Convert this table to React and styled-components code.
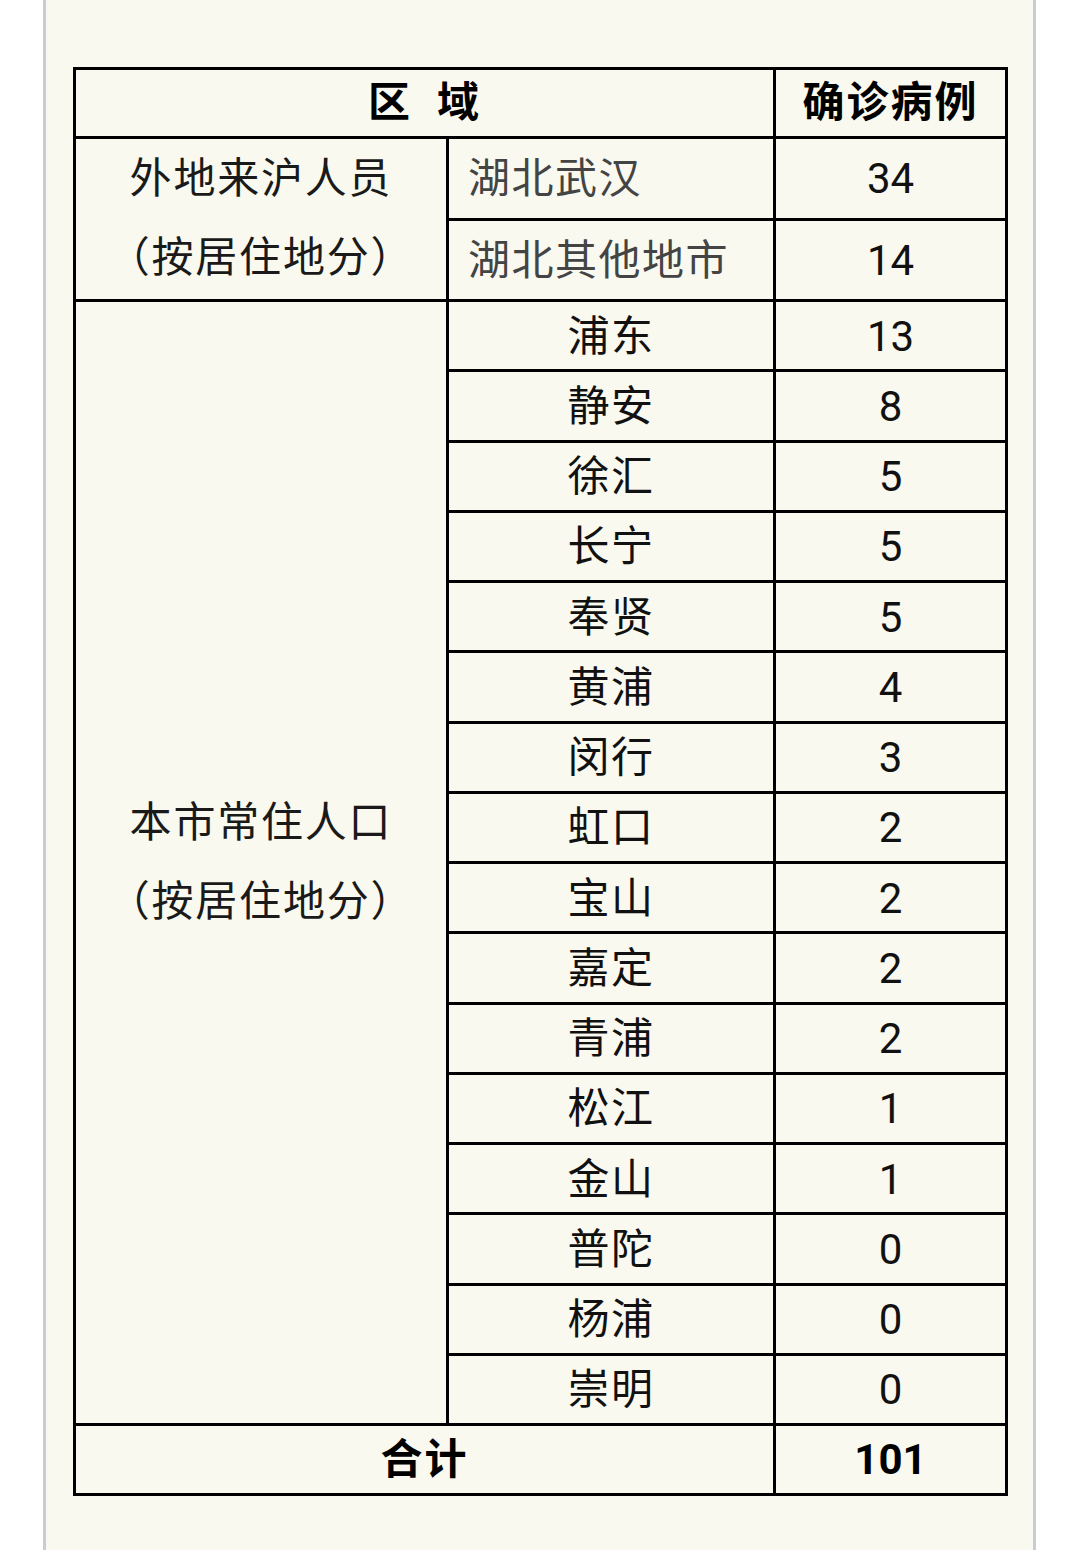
import styled, { createGlobalStyle } from 'styled-components'

const rows = [
  ['浦东', 13],
  ['静安', 8],
  ['徐汇', 5],
  ['长宁', 5],
  ['奉贤', 5],
  ['黄浦', 4],
  ['闵行', 3],
  ['虹口', 2],
  ['宝山', 2],
  ['嘉定', 2],
  ['青浦', 2],
  ['松江', 1],
  ['金山', 1],
  ['普陀', 0],
  ['杨浦', 0],
  ['崇明', 0],
]

const App = () => {
  return (
    <>
      <GlobalStyle />
      <Page>
        <Panel>
          <Table>
            <colgroup>
              <col style={{ width: 373 }} />
              <col style={{ width: 327 }} />
              <col style={{ width: 232 }} />
            </colgroup>
            <tbody>
              <Row $h={69}>
                <HeadCell colSpan={2} $cjk>区&nbsp;&nbsp;域</HeadCell>
                <HeadCell $cjk>确诊病例</HeadCell>
              </Row>
              <Row $h={80}>
                <GroupCell rowSpan={2}>
                  外地来沪人员
                  <br />
                  （按居住地分）
                </GroupCell>
                <AreaCell $muted>湖北武汉</AreaCell>
                <NumCell>34</NumCell>
              </Row>
              <Row $h={80}>
                <AreaCell $muted>湖北其他地市</AreaCell>
                <NumCell>14</NumCell>
              </Row>
              {rows.map(([name, count], i) => (
                <Row key={name} $h={70.25}>
                  {i === 0 && (
                    <GroupCell rowSpan={rows.length}>
                      本市常住人口
                      <br />
                      （按居住地分）
                    </GroupCell>
                  )}
                  <AreaCell>{name}</AreaCell>
                  <NumCell>{count}</NumCell>
                </Row>
              ))}
              <Row $h={70}>
                <HeadCell colSpan={2} $cjk>合计</HeadCell>
                <HeadCell>101</HeadCell>
              </Row>
            </tbody>
          </Table>
        </Panel>
      </Page>
    </>
  )
}

export default App

// Styles

const GlobalStyle = createGlobalStyle`
  html, body {
    margin: 0;
    padding: 0;
    background: #ffffff;
  }

  body {
    font-family: Roboto, "Noto Sans CJK SC", "Noto Sans", sans-serif;
  }
`

const Page = styled.div`
  min-height: 1550px;
  padding-left: 43px;
  box-sizing: border-box;
  display: flex;
`

const Panel = styled.div`
  width: 993px;
  min-height: 1550px;
  box-sizing: border-box;

  background: #f9f9ef;
  border-left: 3px solid #c9cdd1;
  border-right: 3px solid #c9cdd1;

  padding: 67px 0 0 27px;
`

const Table = styled.table`
  width: 935px;
  table-layout: fixed;
  border-collapse: collapse;

  font-size: 42px;
  line-height: 48px;
  color: #111;
`

const Row = styled.tr`
  height: ${({ $h }) => $h}px;
`

const Cell = styled.td`
  border: 3px solid #000;
  padding: 0;
  vertical-align: middle;
  white-space: nowrap;
`

const HeadCell = styled(Cell)`
  text-align: center;
  font-weight: 700;
  color: #000;
  letter-spacing: ${({ $cjk }) => ($cjk ? '2px' : '0')};
  padding-bottom: 0;
`

const GroupCell = styled(Cell)`
  text-align: center;
  line-height: 79px;
  letter-spacing: 1.8px;
  color: #1a1a1a;
  padding-bottom: 2px;
`

const AreaCell = styled(Cell)`
  text-align: ${({ $muted }) => ($muted ? 'left' : 'center')};
  padding-left: ${({ $muted }) => ($muted ? '19px' : '0')};
  padding-top: 2px;
  letter-spacing: 1.5px;
  color: ${({ $muted }) => ($muted ? '#444' : '#111')};
`

const NumCell = styled(Cell)`
  text-align: center;
  padding-top: 2px;
  color: #111;
`
